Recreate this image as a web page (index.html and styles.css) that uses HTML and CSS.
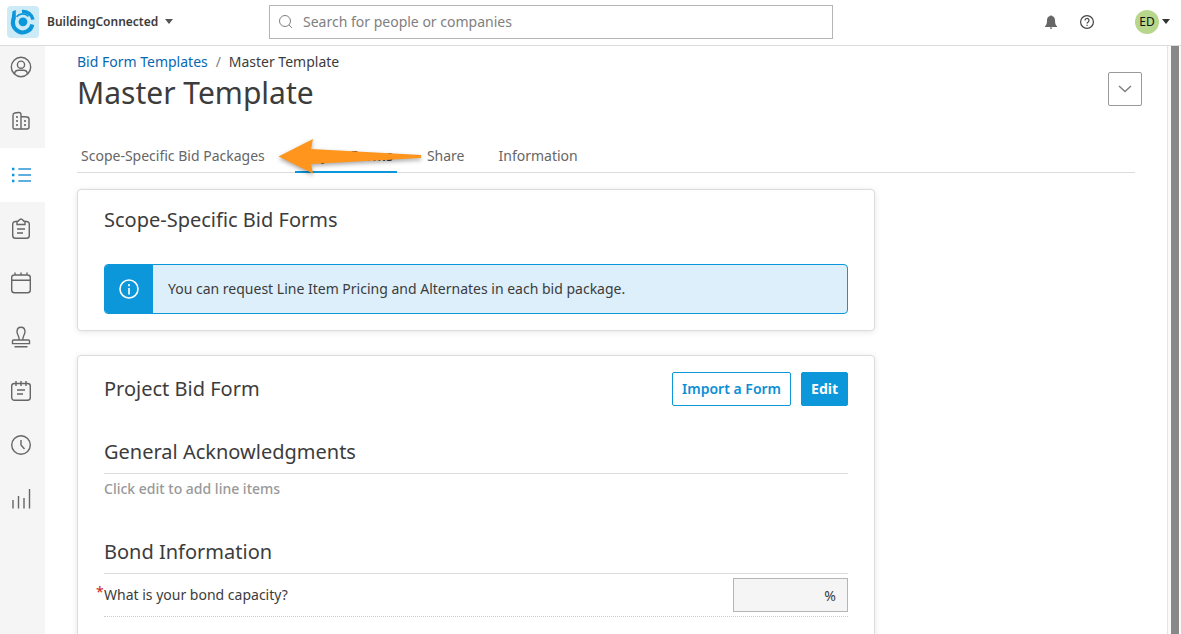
FILE: index.html
```
<!DOCTYPE html>
<html lang="en">
<head>
<meta charset="utf-8">
<meta name="viewport" content="width=device-width, initial-scale=1">
<title>Master Template - BuildingConnected</title>
<link rel="stylesheet" href="styles.css">
</head>
<body>
<header class="topbar">
  <button class="brand" type="button">
    <svg class="brand-logo" viewBox="0 0 32 32" aria-hidden="true">
      <rect width="32" height="32" rx="4" fill="#cdeaf7"/>
      <g fill="none" stroke="#0b97da">
        <path d="M25.300 18.500A9.800 9.800 0 1 1 6.800 12.500" stroke-width="4"/>
        <path d="M15 5.600A10.200 10.200 0 0 1 26 13.600" stroke-width="3.400"/>
      </g>
      <path d="M5.500 5.200L8.800 4v8.500L6 16H4.200z" fill="#0b97da"/>
      <path d="M9.500 10.800A8 8 0 0 1 21.500 10.300" fill="none" stroke="#0b97da" stroke-width="1.800"/>
      <circle cx="16" cy="15.800" r="4.400" fill="#0b97da"/>
    </svg>
    <span>BuildingConnected</span>
    <svg class="caret" viewBox="0 0 8 5" aria-hidden="true"><path d="M0 0h8L4 5z"/></svg>
  </button>
  <div class="search">
    <svg class="search-icon" viewBox="0 0 16 16" aria-hidden="true"><circle cx="7" cy="7" r="5.500"/><path d="M11 11l3 3"/></svg>
    <input type="search" aria-label="Search" placeholder="Search for people or companies">
  </div>
  <div class="tools">
    <button class="tool" type="button" aria-label="Notifications">
      <svg class="bell" viewBox="0 0 12 14" aria-hidden="true"><path d="M5.200 1.100a.8.8 0 0 1 1.600 0C9 1.500 10 3.200 10 5.200c0 3 .5 4.700 2 6V12H0v-.8c1.500-1.300 2-3 2-6 0-2 1-3.700 3.200-4.100zM4.700 12.600h2.600a1.300 1.300 0 0 1-2.600 0z"/></svg>
    </button>
    <button class="tool" type="button" aria-label="Help">
      <svg class="help" viewBox="0 0 14 14" aria-hidden="true"><circle cx="7" cy="7" r="6.400"/><path d="M5 5.500a2 2 0 1 1 3 1.700c-.7.400-1 .7-1 1.400M7 9.700v1.200"/></svg>
    </button>
    <button class="account" type="button" aria-label="Account">
      <span class="avatar">ED</span>
      <svg class="caret" viewBox="0 0 8 5" aria-hidden="true"><path d="M0 0h8L4 5z"/></svg>
    </button>
  </div>
</header>
<div class="shell">
  <nav class="sidebar" aria-label="Main">
    <a class="side-item" href="#" aria-label="Profile"><svg viewBox="0 0 22 22"><circle cx="11" cy="11" r="9.700"/><circle cx="11" cy="8.700" r="3.600"/><path d="M4.500 18c.3-2.700 2-3.700 4-3.700h5c2 0 3.700 1 4 3.700"/></svg></a>
    <a class="side-item" href="#" aria-label="Companies"><svg viewBox="0 0 22 22"><path d="M11 19H4.500A1.500 1.500 0 0 1 3 17.500v-12C3 4 3.500 3.200 4.700 3L8.500 2.500C10 2.300 11 3 11 4.500V19h6c1.200 0 2-.8 2-2V9c0-1.200-.7-1.900-2-2L11 6.500"/><path d="M6.200 7h1.600M6.200 11h1.600M6.200 15h1.600M14.200 11h1.600M14.200 15h1.600" stroke-width="1.800"/></svg></a>
    <a class="side-item active" href="#" aria-label="Templates" aria-current="page"><svg viewBox="0 0 22 22"><path d="M8.300 5H21M8.300 11H21M8.300 17H21"/><path d="M2 5h2.400M2 11h2.400M2 17h2.400" stroke-width="2.400" stroke="#0b97da"/></svg></a>
    <a class="side-item" href="#" aria-label="Bids"><svg viewBox="0 0 22 22"><path d="M7 3.500H5.500c-1.700 0-2.800 1-2.800 2.700v11.300c0 1.700 1.100 2.800 2.800 2.800h11c1.700 0 2.800-1.100 2.800-2.800V6.200c0-1.700-1.100-2.700-2.800-2.700H15"/><path d="M7 3.500c2 0 2-2.500 4-2.500s2 2.500 4 2.500v3H7zM7 11h8M7 15h6"/></svg></a>
    <a class="side-item" href="#" aria-label="Calendar"><svg viewBox="0 0 22 22"><path d="M4.500 3h13c1.500 0 2.800 1 2.800 2.500V18c0 1.500-1.300 2.800-2.800 2.800h-13c-1.500 0-2.800-1.300-2.800-2.800V5.500C1.700 4 3 3 4.500 3zM1.700 8.300h18.600M5 .5V3M11 .5V3M17 .5V3"/></svg></a>
    <a class="side-item" href="#" aria-label="Qualifications"><svg viewBox="0 0 22 22"><path d="M9 14c1-3-2-5-2-8.300C7 3 8.500 1.200 11 1.200S15 3 15 5.700C15 9 12 11 13 14M3.500 14h15c.7 0 1 .4 1 1v2.600h-17V15c0-.6.300-1 1-1zM4.500 20.700h13"/></svg></a>
    <a class="side-item" href="#" aria-label="Notes"><svg viewBox="0 0 22 22"><path d="M4.500 3.500h13c1.700 0 2.800 1 2.800 2.500v11.500c0 1.500-1.100 2.700-2.800 2.700h-13c-1.700 0-2.800-1.200-2.800-2.700V6c0-1.500 1.100-2.500 2.800-2.500zM6 1v5M11 1v5M16 1v5M7 10h8M7 14h6"/></svg></a>
    <a class="side-item" href="#" aria-label="History"><svg viewBox="0 0 22 22"><circle cx="11" cy="11" r="9.300"/><path d="M11 6v5l3.500 4"/></svg></a>
    <a class="side-item" href="#" aria-label="Reports"><svg viewBox="0 0 22 22"><path d="M3 12v8.500M8.500 8v12.500M14 10v10.500M19.500 1v19.500"/></svg></a>
  </nav>
  <main class="content">
    <nav class="crumbs" aria-label="Breadcrumb">
      <a href="#">Bid Form Templates</a><span class="slash">/</span><span>Master Template</span>
    </nav>
    <div class="title-row">
      <h1>Master Template</h1>
      <button class="more" type="button" aria-label="More actions"><svg viewBox="0 0 14 8" aria-hidden="true"><path d="M1 1l6 5.500L13 1"/></svg></button>
    </div>
    <nav class="tabs" aria-label="Template sections">
      <a class="tab" href="#">Scope-Specific Bid Packages</a>
      <a class="tab selected" href="#" aria-current="page">Project Forms</a>
      <a class="tab" href="#">Share</a>
      <a class="tab" href="#">Information</a>
      <svg class="pointer" viewBox="0 0 150 44" aria-hidden="true"><path d="M3.500 21.500L38 4l-2 10 110 6v3L36 29l2 9.500z"/></svg>
    </nav>
    <section class="card">
      <h2>Scope-Specific Bid Forms</h2>
      <div class="notice">
        <div class="notice-icon"><svg viewBox="0 0 20 20" aria-hidden="true"><circle cx="10" cy="10" r="9"/><path d="M10 9v6.500M10 5v2.200"/></svg></div>
        <p>You can request Line Item Pricing and Alternates in each bid package.</p>
      </div>
    </section>
    <section class="card bid-form">
      <div class="card-head">
        <h2>Project Bid Form</h2>
        <button class="btn" type="button">Import a Form</button>
        <button class="btn primary" type="button">Edit</button>
      </div>
      <h3>General Acknowledgments</h3>
      <p class="empty">Click edit to add line items</p>
      <h3>Bond Information</h3>
      <div class="question">
        <label for="capacity">What is your bond capacity?<span class="required">*</span></label>
        <input id="capacity" type="text" value="%" readonly>
      </div>
    </section>
  </main>
  <div class="scrollbar" aria-hidden="true"><div class="thumb"></div></div>
</div>
</body>
</html>
```
FILE: styles.css
```
* { box-sizing: border-box; }
body {
  margin: 0;
  height: 100vh;
  display: flex;
  flex-direction: column;
  overflow: hidden;
  background: #fff;
  color: #3c3c3c;
  font: 14px/20px "Noto Sans", "Open Sans", sans-serif;
}
button, input { font: inherit; color: inherit; }
button { cursor: pointer; }
h1, h2, h3, p { margin: 0; font-weight: 400; }
a { text-decoration: none; color: #0668b3; }
svg { display: block; flex: none; }

.topbar {
  display: grid;
  grid-template-columns: 262px minmax(200px, 564px) 1fr;
  align-items: center;
  flex: none;
  height: 46px;
  padding: 0 11px 2px 7px;
  border-bottom: 1px solid #dcdcdc;
  background: #fff;
  z-index: 1;
}
.brand, .account, .tool {
  display: flex;
  align-items: center;
  padding: 0;
  border: 0;
  background: none;
}
.brand { gap: 8px; font-size: 12px; line-height: 18px; font-weight: 600; }
.brand .caret { margin-left: -1px; }
.brand-logo { width: 32px; height: 32px; }
.caret { width: 8px; height: 5px; fill: #555; }
.search {
  display: flex;
  align-items: center;
  gap: 9px;
  height: 34px;
  padding: 0 8px;
  border: 1px solid #b5b5b5;
}
.search-icon { width: 16px; height: 16px; fill: none; stroke: #808080; }
.search input { flex: 1; min-width: 0; border: 0; padding: 0; outline: 0; background: none; }
.search input::placeholder { color: #808080; opacity: 1; }
.tools { display: flex; justify-content: flex-end; align-items: center; }
.tool { justify-content: center; width: 36px; height: 24px; }
.bell { width: 12px; height: 14px; fill: #666; }
.help { width: 14px; height: 14px; fill: none; stroke: #444; stroke-width: 1.2; }
.account { gap: 3px; margin-left: 30px; }
.account .caret { fill: #333; }
.avatar {
  width: 24px;
  height: 24px;
  border-radius: 50%;
  background: #b7d78c;
  color: #111;
  font-size: 12px;
  line-height: 24px;
  text-align: center;
}

.shell { display: flex; flex: 1; min-height: 0; }
.sidebar { flex: none; width: 45px; margin-top: -6px; background: #f5f5f5; }
.side-item { display: flex; align-items: center; height: 54px; padding-left: 10px; }
.side-item svg { width: 22px; height: 22px; fill: none; stroke: #666; stroke-width: 1.4; }
.side-item.active { background: #fff; }
.side-item.active svg { stroke: #5eaee0; stroke-width: 1.8; }

.content { flex: 1; min-width: 0; padding: 6px 25px 0 32px; overflow: hidden; }
.crumbs { display: flex; }
.slash { width: 21px; text-align: center; color: #808080; }
.title-row { display: flex; justify-content: space-between; height: 68px; }
h1 { font-size: 30px; line-height: 42px; }
.more {
  display: flex;
  align-items: center;
  justify-content: center;
  width: 34px;
  height: 34px;
  padding: 0;
  border: 1px solid #999;
  border-radius: 2px;
  background: #fff;
}
.more svg { width: 14px; height: 8px; fill: none; stroke: #808080; stroke-width: 1.5; }
.tabs {
  position: relative;
  display: flex;
  gap: 26px;
  height: 33px;
  margin-right: 7px;
  border-bottom: 1px solid #dcdcdc;
}
.tab { height: 33px; padding: 6px 4px 0; color: #666; white-space: nowrap; }
.tab.selected { border-bottom: 2px solid #0b97da; color: #3c3c3c; font-weight: 600; }
.pointer {
  position: absolute;
  left: 198px;
  top: -5px;
  width: 150px;
  height: 44px;
  fill: #ff951d;
  filter: drop-shadow(0 2px 2px rgba(0, 0, 0, .35));
}

.card {
  max-width: 798px;
  margin: 16px 0 24px;
  padding: 16px 26px;
  border: 1px solid #dcdcdc;
  border-radius: 4px;
  background: #fff;
  box-shadow: 0 1px 6px rgba(0, 0, 0, .1);
}
.bid-form { margin-top: 0; padding-bottom: 32px; }
h2, h3 { font-size: 20px; line-height: 28px; }
.notice {
  display: flex;
  min-height: 50px;
  margin-top: 30px;
  border: 1px solid #0b97da;
  border-radius: 4px;
  background: #dceffa;
  overflow: hidden;
}
.notice-icon { display: flex; align-items: center; justify-content: center; width: 48px; background: #0b97da; }
.notice-icon svg { width: 20px; height: 20px; fill: none; stroke: #fff; stroke-width: 1.6; }
.notice p { padding: 14px 15px; }
.card-head { display: flex; align-items: center; gap: 10px; }
.card-head h2 { flex: 1; }
.btn {
  height: 34px;
  padding: 0 9px;
  border: 1px solid #0b97da;
  border-radius: 2px;
  background: #fff;
  color: #0b8fd4;
  font-weight: 600;
  white-space: nowrap;
}
.btn.primary { background: #0b97da; color: #fff; font-weight: 700; }
h3 { margin-top: 32px; padding-bottom: 7px; border-bottom: 1px solid #dcdcdc; }
.empty { padding: 5px 0 7px; color: #999; font-weight: 500; }
.question {
  display: flex;
  align-items: center;
  justify-content: space-between;
  height: 43px;
  border-bottom: 1px dotted #ccc;
}
.question label { position: relative; }
.required { position: absolute; left: -8px; top: -3px; color: #c22; }
.question input {
  width: 115px;
  height: 34px;
  padding: 0 11px;
  border: 1px solid #b5b5b5;
  background: #f5f5f5;
  text-align: right;
}
.scrollbar { flex: none; width: 14px; padding: 0 2px 0 3px; border-left: 1px solid #e4e4e4; background: #fafafa; }
.thumb { height: 100%; background: #888; }
```
